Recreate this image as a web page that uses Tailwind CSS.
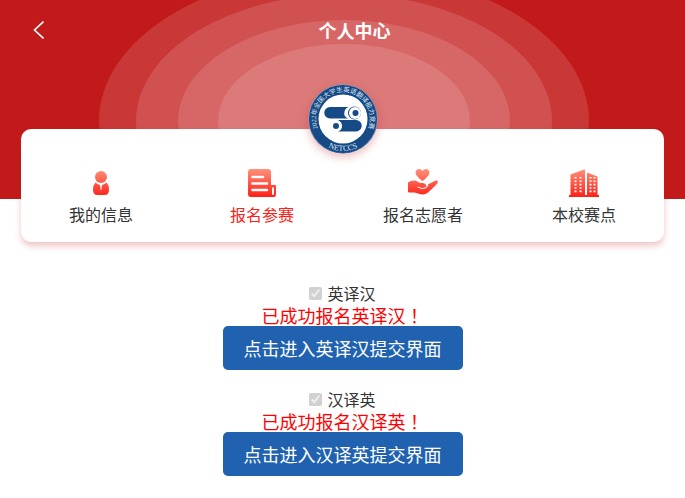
<!DOCTYPE html>
<html lang="zh-CN">

<head>
    <meta charset="utf-8" />
    <meta name="viewport" content="width=device-width, initial-scale=1" />
    <title>个人中心</title>
    <script src="https://cdn.jsdelivr.net/npm/@tailwindcss/browser@4"></script>
</head>

<body class="bg-white font-['Noto_Sans_CJK_SC',sans-serif] text-base text-[#333]">
    <header class="relative h-[199px] overflow-hidden bg-[#c21a1a]">
        <!-- Rings behind the logo -->
        <svg class="absolute left-1/2 top-0 -translate-x-1/2" width="500" height="199" viewBox="0 0 500 199" aria-hidden="true">
            <ellipse cx="251" cy="121" rx="245" ry="150" fill="#c93737" />
            <ellipse cx="251" cy="121" rx="208" ry="127" fill="#d05150" />
            <ellipse cx="251" cy="121" rx="166" ry="101" fill="#d76766" />
            <ellipse cx="251" cy="121" rx="126" ry="77" fill="#dc7a79" />
        </svg>
        <nav class="relative flex h-15 items-center pl-8 pr-5 text-white">
            <button type="button" aria-label="返回" class="w-3">
                <svg width="12" height="20" viewBox="0 0 12 20" fill="none" stroke="currentColor" stroke-width="1.6">
                    <path d="M11.5 1.5 2.5 10l9 8.5" />
                </svg>
            </button>
            <h1 class="flex-1 text-center text-lg font-bold">个人中心</h1>
        </nav>
    </header>

    <main>
        <section class="relative mx-[3%] -mt-[70px] rounded-[10px] bg-white pb-4 pt-10 shadow-[0_4px_6px_rgba(194,26,26,0.25)]">
            <!-- Competition logo -->
            <svg class="absolute -top-[45px] left-1/2 size-[70px] -translate-x-1/2 rounded-full shadow-[0_3px_8px_rgba(194,26,26,0.3)]" viewBox="0 0 70 70" role="img" aria-label="NETCCS">
                <circle cx="35" cy="35" r="35" fill="#8d93b5" />
                <circle cx="35" cy="35" r="34" fill="#164a86" />
                <circle cx="35" cy="35" r="24.5" fill="#fff" />
                <path id="arc-top" d="M35 62A27 27 0 1 1 35.010 62" fill="none" />
                <path id="arc-bottom" d="M3 35A32 32 0 0 0 67 35" fill="none" />
                <g fill="#dfe6f0" text-anchor="middle">
                    <text font-family="Liberation Serif, Noto Sans CJK SC, serif" font-size="6.5"><textPath href="#arc-top" startOffset="50%">2022年全国大学生英语翻译能力竞赛</textPath></text>
                    <text font-family="Liberation Serif, serif" font-size="8"><textPath href="#arc-bottom" startOffset="50%">NETCCS</textPath></text>
                </g>
                <g fill="#164a86">
                    <path d="M22 23H43A6 6 0 0 0 40 34.500H22A5.700 5.700 0 0 1 22 23Z" />
                    <circle cx="46.500" cy="29" r="6.500" />
                    <circle cx="47" cy="29" r="6" fill="#fff" />
                    <circle cx="47.500" cy="29" r="3" />
                    <path d="M30 36H48A5.700 5.700 0 0 1 48 47.500H30Q34 46 34 42T30 36Z" />
                    <circle cx="28" cy="42" r="5.500" fill="#fff" />
                    <circle cx="28" cy="42" r="3" />
                </g>
            </svg>

            <ul class="grid grid-cols-4 text-center leading-6">
                <li>
                    <a href="#" class="flex flex-col items-center gap-[5px]">
                        <svg width="30" height="28" viewBox="0 0 30 28" fill="url(#red)">
                            <defs>
                                <linearGradient id="red" gradientUnits="userSpaceOnUse" x1="0" y1="0" x2="0" y2="28">
                                    <stop offset="0" stop-color="#ff9179" />
                                    <stop offset="1" stop-color="#fd2018" />
                                </linearGradient>
                            </defs>
                            <circle cx="15" cy="8" r="6" />
                            <path d="M9.500 13.500Q11.500 15.500 13.500 15.800L15 18.500 16.500 15.800Q18.500 15.500 20.500 13.500Q23 16 23 20.500Q23 26 18.500 26H11.500Q7 26 7 20.500Q7 16 9.500 13.500Z" />
                            <path d="M14.700 17h.6l.4 3-.7 1-.7-1Z" fill="#fff" />
                        </svg>
                        <span>我的信息</span>
                    </a>
                </li>
                <li>
                    <a href="#" class="flex flex-col items-center gap-[5px] text-[#fd2018]">
                        <svg width="30" height="28" viewBox="0 0 30 28" fill="url(#red)">
                            <path d="M4 0H21Q24 0 24 3V16H29V25.500Q29 28 26.500 28H4Q1 28 1 25V3Q1 0 4 0Z" />
                            <path d="M5.500 8H16M5.500 14.500H20M5.500 21H20" fill="none" stroke="#fff" stroke-width="2.600" stroke-linecap="round" />
                            <path d="M25 18.500h2V25q0 1-1 1t-1-1Z" fill="#fff" />
                        </svg>
                        <span>报名参赛</span>
                    </a>
                </li>
                <li>
                    <a href="#" class="flex flex-col items-center gap-[5px]">
                        <svg width="30" height="28" viewBox="0 0 30 28" fill="url(#red)">
                            <path d="M14.500 12Q7.500 7 7.500 3.500Q8 0 11 0Q13.500 0 14.500 2Q15.500 0 18 0Q21 0 21.500 3.500Q21.500 7 14.500 12Z" />
                            <path d="M0 13.500Q5 10 9.500 12.500Q11 14 14 14Q18 14 18 16.500L19 18Q20 17 20 15.500L26.500 12Q29 11 30 12.500Q30 14 27.500 16.500L20 23.500Q17 26 13.500 25.500L6.500 23.500H1Q0 23.500 0 22.500Z" />
                            <path d="M9.500 18Q14.500 21 18.500 18.500Q20 17.500 19.500 15.500" fill="none" stroke="#fff" stroke-width="1" />
                        </svg>
                        <span>报名志愿者</span>
                    </a>
                </li>
                <li>
                    <a href="#" class="flex flex-col items-center gap-[5px]">
                        <svg width="30" height="28" viewBox="0 0 30 28" fill="url(#red)">
                            <path d="M0 26H1.500V5.500L15 0.500H16V26H18V3.500L28.500 7.500V26H30V28H0Z" />
                            <path d="M6.500 8V25M11.500 8V25M21.500 8V25M25.500 8V25" fill="none" stroke="#fff" stroke-width="2" stroke-dasharray="1.600 1.800" />
                        </svg>
                        <span>本校赛点</span>
                    </a>
                </li>
            </ul>
        </section>

        <form class="flex flex-col items-center gap-[18px] px-5 py-10">
            <div class="flex flex-col items-center">
                <label class="flex h-[22px] items-center gap-[5px] leading-[22px]">
                    <input type="checkbox" checked disabled class="size-[13px]" />
                    <span>英译汉</span>
                </label>
                <p class="text-lg leading-[22px] text-[#f00]">已成功报名英译汉<span lang="zh-TW" class="font-['Noto_Sans_CJK_TC',sans-serif]">！</span></p>
                <button type="button" class="h-11 w-60 rounded-[5px] bg-[#2062b0] text-lg text-white">点击进入英译汉提交界面</button>
            </div>
            <div class="flex flex-col items-center">
                <label class="flex h-[22px] items-center gap-[5px] leading-[22px]">
                    <input type="checkbox" checked disabled class="size-[13px]" />
                    <span>汉译英</span>
                </label>
                <p class="text-lg leading-[22px] text-[#f00]">已成功报名汉译英<span lang="zh-TW" class="font-['Noto_Sans_CJK_TC',sans-serif]">！</span></p>
                <button type="button" class="h-11 w-60 rounded-[5px] bg-[#2062b0] text-lg text-white">点击进入汉译英提交界面</button>
            </div>
        </form>
    </main>
</body>

</html>
